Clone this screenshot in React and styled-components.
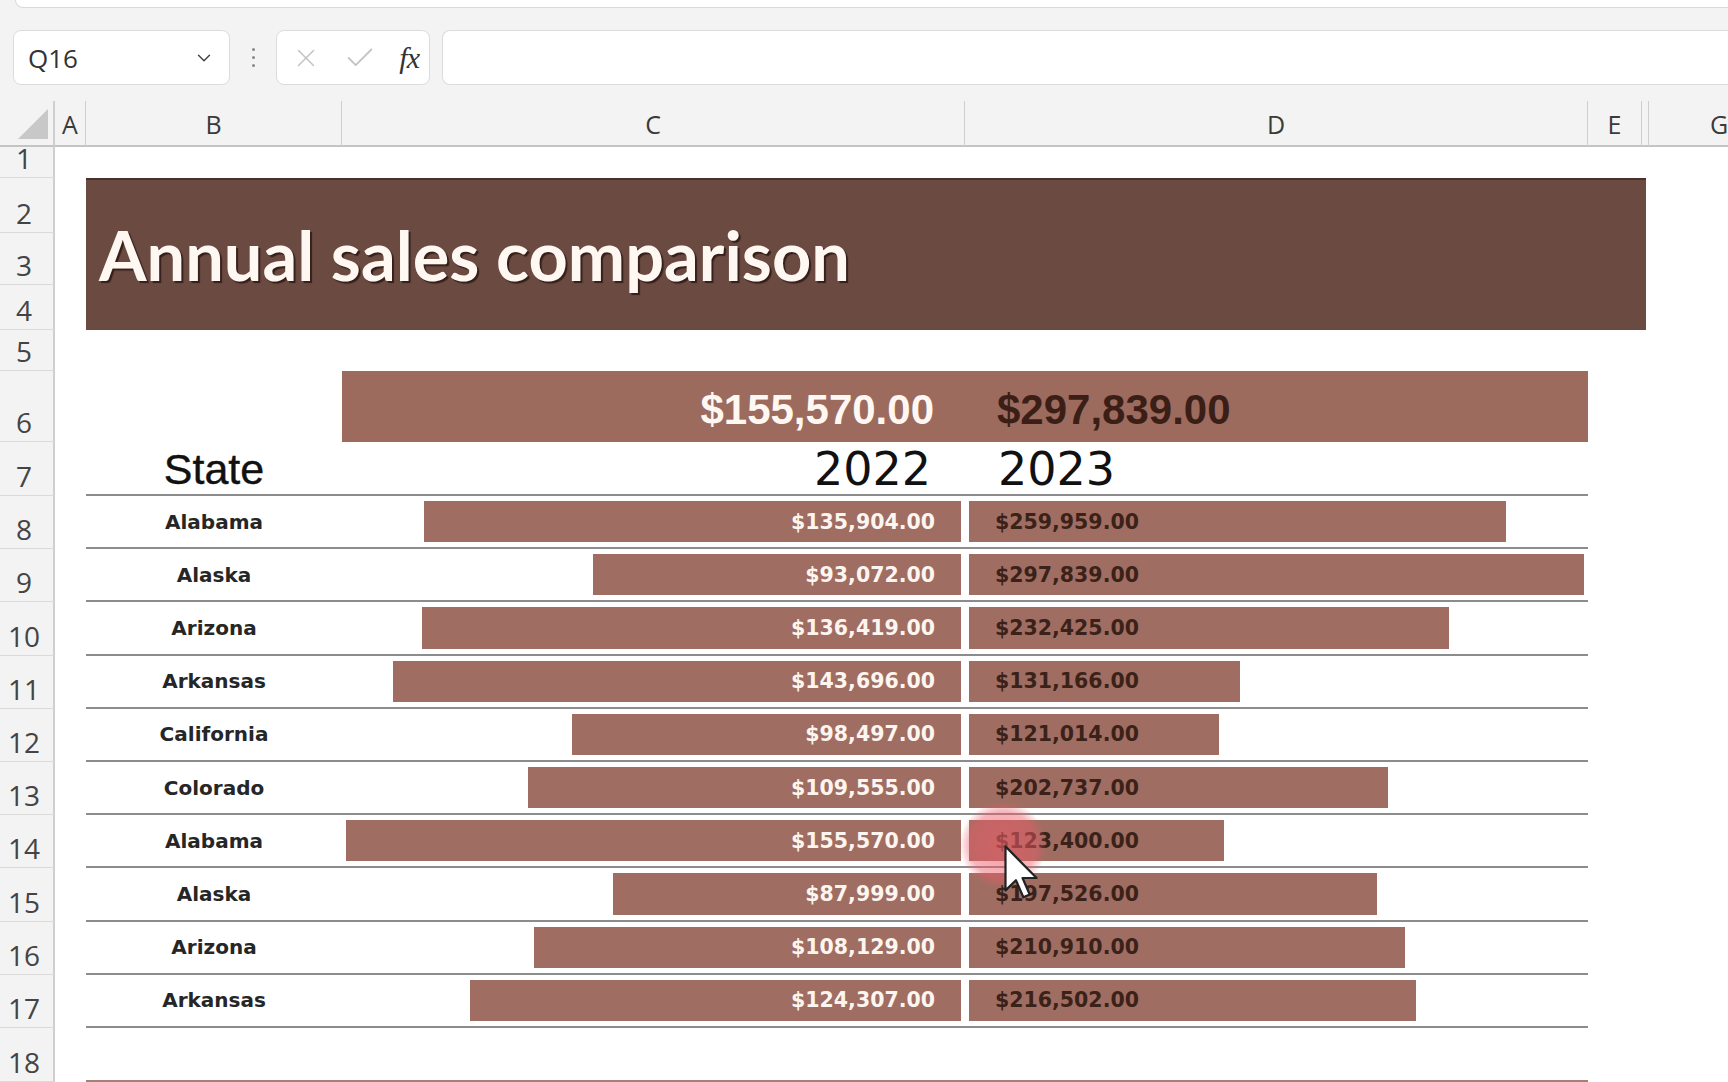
import React from "react";
import styled, { createGlobalStyle } from "styled-components";
import { X, Check, ChevronDown } from "lucide-react";

const GlobalStyle = createGlobalStyle`
  html, body { margin: 0; padding: 0; }
  body { background: #f3f3f3; overflow: hidden; }
  * { box-sizing: border-box; }
`;

const BAR_MAX = 615;
const MAX_2022 = 155570;
const MAX_2023 = 297839;

const rows = [
  ["Alabama", 135904, 259959],
  ["Alaska", 93072, 297839],
  ["Arizona", 136419, 232425],
  ["Arkansas", 143696, 131166],
  ["California", 98497, 121014],
  ["Colorado", 109555, 202737],
  ["Alabama", 155570, 123400],
  ["Alaska", 87999, 197526],
  ["Arizona", 108129, 210910],
  ["Arkansas", 124307, 216502],
];

const money = (v) =>
  "$" + v.toLocaleString("en-US", { minimumFractionDigits: 2, maximumFractionDigits: 2 });

const Window = styled.div`
  position: relative;
  width: 1728px;
  height: 1082px;
  overflow: hidden;
  background: #f3f3f3;
  display: flex;
  flex-direction: column;
`;

const RibbonEdge = styled.div`
  height: 8px;
  margin-left: 15px;
  background: #fff;
  border-left: 1px solid #d9d9d9;
  border-bottom: 1px solid #d9d9d9;
  border-bottom-left-radius: 8px;
`;

const FormulaBar = styled.div`
  height: 93px;
  display: flex;
  align-items: flex-start;
  padding: 22px 0 0 13px;
`;

const Field = styled.div`
  height: 55px;
  background: #fff;
  border: 1px solid #dcdcdc;
  border-radius: 8px;
  display: flex;
  align-items: center;
`;

const NameBox = styled(Field)`
  width: 217px;
  padding: 0 14px 0 14px;
  justify-content: space-between;
  font: 400 26px "Open Sans", sans-serif;
  color: #333;
`;

const Dots = styled.div`
  width: 46px;
  height: 55px;
  display: flex;
  flex-direction: column;
  align-items: center;
  justify-content: center;
  gap: 5px;

  span {
    width: 3px;
    height: 3px;
    border-radius: 50%;
    background: #888;
  }
`;

const FxBox = styled(Field)`
  width: 154px;
  padding: 0 10px 0 14px;
  justify-content: space-between;
  color: #c4c4c4;
`;

const Fx = styled.i`
  font: italic 400 30px "Liberation Serif", serif;
  color: #333;
  letter-spacing: -1px;
`;

const FormulaInput = styled(Field)`
  flex: 1;
  margin-left: 12px;
  border-right: none;
  border-radius: 8px 0 0 8px;
`;

const Sheet = styled.div`
  display: grid;
  grid-template-columns: 55px 31px 256px 623px 623px 54px 7px 140px;
  grid-template-rows: 46px 31px 55px 52px 45px 41px 71px 54px repeat(10, 53.2px) 54px;
  background: #fff;
  flex: 1;
`;

const Corner = styled.div`
  grid-row: 1;
  grid-column: 1;
  background: #f3f3f3;
  border-bottom: 2px solid #c4c4c4;
  border-right: 2px solid #cfcfcf;
  display: flex;
  align-items: flex-end;
  justify-content: flex-end;
  padding: 0 5px 6px 0;

  &::after {
    content: "";
    width: 0;
    height: 0;
    border-left: 30px solid transparent;
    border-bottom: 30px solid #c8c8c8;
  }
`;

const ColHead = styled.div`
  grid-row: 1;
  grid-column: ${(p) => p.$col};
  background: #f3f3f3;
  border-bottom: 2px solid #c4c4c4;
  border-right: ${(p) => (p.$last ? "none" : "1px solid #cfcfcf")};
  display: flex;
  align-items: center;
  justify-content: center;
  padding-top: 1px;
  font: 400 25px "Open Sans", sans-serif;
  color: #3a3a3a;
`;

const RowHead = styled.div`
  grid-column: 1;
  grid-row: ${(p) => p.$row};
  background: #f3f3f3;
  border-right: 2px solid #cfcfcf;
  border-bottom: 1px solid #dadada;
  display: flex;
  align-items: flex-end;
  justify-content: center;
  padding-right: 5px;
  font: 400 28px/38px "Open Sans", sans-serif;
  color: #444;
`;

const Banner = styled.div`
  grid-row: 3 / 6;
  grid-column: 3 / 8;
  margin-right: 3px;
  background: #6b4a41;
  border-top: 2px solid #4a322c;
  display: flex;
  align-items: center;
  padding: 0 0 0 13px;
`;

const Title = styled.h1`
  margin: 0;
  font: 700 68.5px/1 "Lato", sans-serif;
  color: #fff8f2;
  text-shadow: 2px 2px 1px rgba(35, 18, 12, 0.75);
`;

const TotalsBar = styled.div`
  grid-row: 7;
  grid-column: 4 / 6;
  background: #9c6b5e;
  display: grid;
  grid-template-columns: 1fr 1fr;
  align-items: center;
  padding-top: 6px;
  font: 700 42px "Liberation Sans", sans-serif;
`;

const Total = styled.div`
  text-align: ${(p) => (p.$left ? "right" : "left")};
  padding: ${(p) => (p.$left ? "0 31px 0 0" : "0 0 0 32px")};
  color: ${(p) => (p.$left ? "#fff8f2" : "#3b1f17")};
`;

const Cell = styled.div`
  grid-row: ${(p) => p.$row};
  grid-column: ${(p) => p.$col};
  border-bottom: 2px solid #8c8c8c;
  display: flex;
  align-items: center;
  min-width: 0;
`;

const StateHead = styled(Cell)`
  justify-content: center;
  font: 400 43px "Liberation Sans", sans-serif;
  color: #111;
  padding-top: 2px;
  -webkit-text-stroke: 0.4px #111;
`;

const YearHead = styled(Cell)`
  justify-content: ${(p) => (p.$left ? "flex-end" : "flex-start")};
  padding: ${(p) => (p.$left ? "2px 34px 0 0" : "2px 0 0 33px")};
  font: 400 46px "DejaVu Sans", sans-serif;
  color: #111;
`;

const StateCell = styled(Cell)`
  justify-content: center;
  font: 700 20px "DejaVu Sans", sans-serif;
  color: #262626;
`;

const BarCell = styled(Cell)`
  justify-content: ${(p) => (p.$left ? "flex-end" : "flex-start")};
  align-items: stretch;
  padding: 5px 4px;
`;

const Bar = styled.div`
  background: #a06d62;
  display: flex;
  align-items: center;
  justify-content: ${(p) => (p.$left ? "flex-end" : "flex-start")};
  padding: ${(p) => (p.$left ? "0 26px 0 0" : "0 0 0 26px")};
  font: 700 20.5px "DejaVu Sans", sans-serif;
  color: ${(p) => (p.$left ? "#fdf5ef" : "#3b2219")};
  white-space: nowrap;
`;

const BottomRule = styled.div`
  grid-row: 19;
  grid-column: 3 / 6;
  border-bottom: 2px solid #a38176;
`;

const Highlight = styled.div`
  position: absolute;
  left: 960px;
  top: 802px;
  width: 86px;
  height: 86px;
  border-radius: 50%;
  background: radial-gradient(
    circle,
    rgba(236, 92, 104, 0.62) 0%,
    rgba(236, 92, 104, 0.45) 55%,
    rgba(236, 92, 104, 0) 72%
  );
  pointer-events: none;
`;

const Pointer = styled.svg`
  position: absolute;
  left: 1004px;
  top: 845px;
  pointer-events: none;
`;

const colLetters = [
  ["A", 2],
  ["B", 3],
  ["C", 4],
  ["D", 5],
  ["E", 6],
  ["", 7],
  ["G", 8],
];

export default function App() {
  return (
    <Window>
      <GlobalStyle />
      <RibbonEdge />
      <FormulaBar>
        <NameBox>
          Q16
          <ChevronDown size={22} color="#444" strokeWidth={1.6} />
        </NameBox>
        <Dots>
          <span />
          <span />
          <span />
        </Dots>
        <FxBox>
          <X size={30} strokeWidth={1.3} />
          <Check size={34} strokeWidth={1.3} />
          <Fx>fx</Fx>
        </FxBox>
        <FormulaInput />
      </FormulaBar>

      <Sheet>
        <Corner />
        {colLetters.map(([l, c]) => (
          <ColHead key={c} $col={c} $last={c === 8}>
            {l}
          </ColHead>
        ))}
        {Array.from({ length: 18 }, (_, i) => (
          <RowHead key={i} $row={i + 2}>
            {i + 1}
          </RowHead>
        ))}

        <Banner>
          <Title>Annual sales comparison</Title>
        </Banner>

        <TotalsBar>
          <Total $left>{money(MAX_2022)}</Total>
          <Total>{money(MAX_2023)}</Total>
        </TotalsBar>

        <StateHead $row={8} $col={3}>State</StateHead>
        <YearHead $row={8} $col={4} $left>2022</YearHead>
        <YearHead $row={8} $col={5}>2023</YearHead>

        {rows.map(([name, a, b], i) => (
          <React.Fragment key={i}>
            <StateCell $row={i + 9} $col={3}>{name}</StateCell>
            <BarCell $row={i + 9} $col={4} $left>
              <Bar $left style={{ width: (a / MAX_2022) * BAR_MAX }}>
                {money(a)}
              </Bar>
            </BarCell>
            <BarCell $row={i + 9} $col={5}>
              <Bar style={{ width: (b / MAX_2023) * BAR_MAX }}>{money(b)}</Bar>
            </BarCell>
          </React.Fragment>
        ))}

        <BottomRule />
      </Sheet>

      <Highlight />
      <Pointer width="36" height="55" viewBox="0 0 13 20">
        <path
          d="M0.5 0.5 L0.5 16.5 L4.3 12.8 L7 19 L9.3 18 L6.7 12 L11.8 12 Z"
          fill="#fff"
          stroke="#222"
          strokeWidth="0.8"
          strokeLinejoin="round"
        />
      </Pointer>
    </Window>
  );
}
